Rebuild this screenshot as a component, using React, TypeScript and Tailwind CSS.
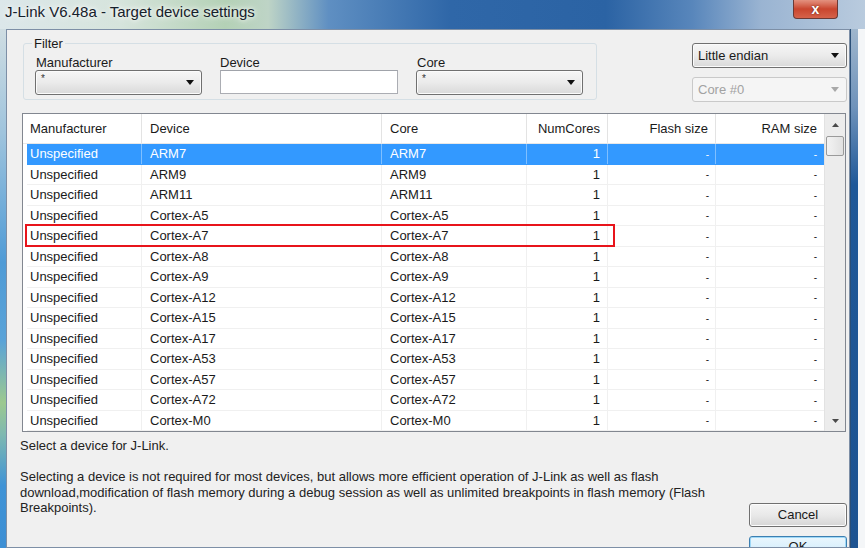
import React from "react";

const devices = [
  "ARM7",
  "ARM9",
  "ARM11",
  "Cortex-A5",
  "Cortex-A7",
  "Cortex-A8",
  "Cortex-A9",
  "Cortex-A12",
  "Cortex-A15",
  "Cortex-A17",
  "Cortex-A53",
  "Cortex-A57",
  "Cortex-A72",
  "Cortex-M0",
];

const font = "font-['Liberation_Sans',Arial,sans-serif]";

const Arrow = ({ color = "#1a1a1a" }: { color?: string }) => (
  <svg width="8" height="5" viewBox="0 0 8 5">
    <path d="M0 0 H8 L4 5 Z" fill={color} />
  </svg>
);

const Combo = ({
  text,
  width,
  disabled,
  small,
}: {
  text: string;
  width: string;
  disabled?: boolean;
  small?: boolean;
}) => (
  <div
    className={
      width +
      " h-[25px] shrink-0 flex items-center justify-between rounded-[3px] border pl-[5px] pr-[7px] " +
      (disabled
        ? "border-[#c9c9c9] bg-[#f5f5f5] text-[#a2a2a2]"
        : "border-[#707070] bg-linear-to-b from-[#f6f6f6] via-[#ebebeb] to-[#d9d9d9] text-[#1a1a1a] shadow-[inset_0_0_0_1px_#fbfbfb]")
    }
  >
    {small ? (
      <span className="self-start pt-[3px] text-[10px] leading-[10px] text-[#333]">{text}</span>
    ) : (
      <span className="leading-[15px]">{text}</span>
    )}
    <Arrow color={disabled ? "#a8a8a8" : "#111"} />
  </div>
);

const ScrollBar = () => (
  <div className="w-[21px] h-full flex flex-col bg-[#ececec] border-l border-[#e2e2e2]">
    <div className="h-[22px] flex items-center justify-center">
      <svg width="7" height="4" viewBox="0 0 7 4">
        <path d="M0 4 H7 L3.5 0 Z" fill="#4a4a4a" />
      </svg>
    </div>
    <div className="mx-[1px] h-[20px] rounded-[2px] border border-[#9a9a9a] bg-linear-to-r from-[#f3f3f3] to-[#e0e0e0]" />
    <div className="mt-auto h-[21px] flex items-center justify-center">
      <svg width="7" height="4" viewBox="0 0 7 4">
        <path d="M0 0 H7 L3.5 4 Z" fill="#4a4a4a" />
      </svg>
    </div>
  </div>
);

const Dash = () => <span className="text-[10px]">-</span>;

const DeviceTable = () => (
  <div className="relative shrink-0 ml-[15px] w-[824px] h-[319px] border border-[#828790] bg-white flex">
    <div className="flex-1 flex flex-col">
      {/* header */}
      <div className="h-[30px] shrink-0 flex border-b border-[#e8e8e8] text-[#1a1a1a]">
        <div className="w-[119px] flex items-center pl-[7px] border-r border-[#e3e3e3]">Manufacturer</div>
        <div className="w-[240px] flex items-center pl-[8px] border-r border-[#e3e3e3]">Device</div>
        <div className="w-[145px] flex items-center pl-[8px] border-r border-[#e3e3e3]">Core</div>
        <div className="w-[81px] flex items-center justify-end pr-[7px] border-r border-[#e3e3e3]">NumCores</div>
        <div className="w-[108px] flex items-center justify-end pr-[7px] border-r border-[#e3e3e3]">Flash size</div>
        <div className="w-[108px] flex items-center justify-end pr-[7px]">RAM size</div>
      </div>
      {/* rows */}
      <div className="flex-1 pl-[4px] overflow-hidden">
        {devices.map((d, i) => {
          const sel = i === 0;
          const line = sel ? "border-[#7fbfff]" : "border-[#f0f0f0]";
          return (
            <div
              key={d}
              className={
                (i % 2 === 0 ? "h-[21px] " : "h-[20px] ") +
                "flex border-b " +
                (sel ? "bg-[#3399ff] text-white border-[#3399ff]" : "text-[#1a1a1a] border-[#f0f0f0]")
              }
            >
              <div className={"w-[115px] flex items-center pl-[3px] border-r " + line}>Unspecified</div>
              <div className={"w-[240px] flex items-center pl-[8px] border-r " + line}>{d}</div>
              <div className={"w-[145px] flex items-center pl-[8px] border-r " + line}>{d}</div>
              <div className={"w-[81px] flex items-center justify-end pr-[7px] border-r " + line}>1</div>
              <div className={"w-[108px] flex items-center justify-end pr-[6px] border-r " + line}>
                <Dash />
              </div>
              <div className="w-[108px] flex items-center justify-end pr-[7px]">
                <Dash />
              </div>
            </div>
          );
        })}
      </div>
    </div>
    <ScrollBar />
    {/* red highlight */}
    <div className="absolute left-[2px] top-[110px] w-[590px] h-[23px] border-2 border-[#e8141b]" />
  </div>
);

const App = () => {
  return (
    <div className={font + " w-[865px] h-[548px] overflow-hidden flex flex-col text-[13px] bg-[#2f66a5]"}>
      {/* title bar */}
      <div className="h-[29px] shrink-0 flex items-start relative">
        <div className="absolute inset-0 bg-[linear-gradient(90deg,#dce7ea_0%,#d6e4dc_14%,#b4d1b6_26%,#bed4c6_31%,#5f8fc2_38%,#2f67a8_52%,#2b63a4_70%,#5886bb_80%,#9ab4d2_88%,#b9cbde_100%)]" />
        <span className="relative pl-[5px] pt-[3px] text-[15px] leading-[18px] text-[#16202b] [text-shadow:0_0_8px_#ffffff,0_0_4px_#ffffff]">
          J-Link V6.48a - Target device settings
        </span>
        <div className="relative ml-auto mr-[27px] w-[45px] h-[19px] rounded-b-[4px] border border-t-0 border-[#6b3a36] bg-linear-to-b from-[#e3917f] via-[#c9452e] to-[#d5624a] flex items-center justify-center text-white font-bold text-[14px] leading-none [text-shadow:0_0_2px_#5a1a10]">
          x
        </div>
      </div>

      <div className="flex-1 min-h-0 flex overflow-hidden">
        {/* left frame */}
        <div className="w-[6px] bg-[linear-gradient(180deg,#cfdde2_0%,#9fc4dd_20%,#4f9bd6_45%,#5aa3d8_60%,#9cc98f_72%,#7fb9b0_78%,#3f93d6_88%,#3d8fd4_100%)]" />

        {/* client area */}
        <div className="flex-1 flex flex-col border border-[#7d8fa6] bg-[#f0f0f0] text-[#1a1a1a] overflow-hidden">
          {/* top section */}
          <div className="h-[83px] shrink-0 flex justify-between pl-[16px] pr-[2px] pt-[13px]">
            <div className="relative w-[574px] h-[57px] rounded-[3px] border border-[#d5dfe5]">
              <span className="absolute -top-[8px] left-[8px] px-[2px] bg-[#f0f0f0] leading-[15px]">Filter</span>
              <div className="flex gap-[18px] pl-[11px] pt-[11px]">
                <div className="flex flex-col">
                  <span className="pl-[1px] leading-[15px]">Manufacturer</span>
                  <Combo text="*" width="w-[167px]" small />
                </div>
                <div className="flex flex-col">
                  <span className="leading-[15px]">Device</span>
                  <div className="w-[178px] h-[24px] border border-[#abadb3] border-t-[#a0a3aa] bg-white" />
                </div>
                <div className="flex flex-col">
                  <span className="pl-[1px] leading-[15px]">Core</span>
                  <Combo text="*" width="w-[167px]" small />
                </div>
              </div>
            </div>
            <div className="flex flex-col gap-[9px]">
              <Combo text="Little endian" width="w-[155px]" />
              <Combo text="Core #0" width="w-[155px]" disabled />
            </div>
          </div>

          <DeviceTable />

          {/* bottom section */}
          <div className="shrink-0 flex pr-[2px]">
            <div className="flex-1 pl-[13px] pt-[6px] text-[#222]">
              <p className="leading-[15px]">Select a device for J-Link.</p>
              <p className="mt-[16px] leading-[15.5px]">
                Selecting a device is not required for most devices, but allows more efficient operation of J-Link as well as flash
                <br />
                download,modification of flash memory during a debug session as well as unlimited breakpoints in flash memory (Flash
                <br />
                Breakpoints).
              </p>
            </div>
            <div className="w-[98px] flex flex-col gap-[9px] pt-[71px]">
              <div className="h-[24px] flex items-center justify-center rounded-[3px] border border-[#707070] bg-linear-to-b from-[#f4f4f4] via-[#e9e9e9] to-[#d6d6d6] shadow-[inset_0_0_0_1px_#fcfcfc]">
                Cancel
              </div>
              <div className="h-[24px] flex items-start justify-center pt-[2px] rounded-[3px] border border-[#3c7fb1] bg-linear-to-b from-[#eaf6fd] via-[#d9f0fc] to-[#bee6fd] shadow-[inset_0_0_0_1px_#9ed8f7] leading-[15px]">
                OK
              </div>
            </div>
          </div>
        </div>

        {/* right frame */}
        <div className="w-[8px] bg-[linear-gradient(180deg,#9fb6cd_0%,#6f93bb_15%,#1f5898_30%,#1d5391_100%)] border-l border-[#2a4f78]" />
        <div className="w-[7px] bg-[#f4f6f8]" />
      </div>
    </div>
  );
};

export default App;
